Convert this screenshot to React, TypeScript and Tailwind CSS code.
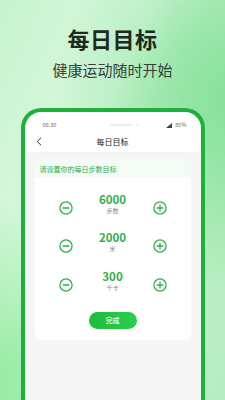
import React from "react";

const goals = [
  { value: "6000", unit: "步数" },
  { value: "2000", unit: "米" },
  { value: "300", unit: "千卡" },
];

function CircleIcon({ plus }: { plus?: boolean }) {
  return (
    <svg width="14" height="14" viewBox="0 0 14 14" className="shrink-0 mt-[8px]">
      <circle cx="7" cy="7" r="6.1" fill="none" stroke="#2fae4c" strokeWidth="1.3" />
      <line x1="4.1" y1="7" x2="9.9" y2="7" stroke="#2fae4c" strokeWidth="1.3" strokeLinecap="round" />
      {plus && (
        <line x1="7" y1="4.1" x2="7" y2="9.9" stroke="#2fae4c" strokeWidth="1.3" strokeLinecap="round" />
      )}
    </svg>
  );
}

export default function App() {
  return (
    <div className="relative w-[225px] h-[400px] overflow-hidden flex flex-col items-center font-['Noto_Sans_CJK_SC',sans-serif] bg-[#c3f1ca] bg-[radial-gradient(circle_at_110%_25%,#80df96_0%,rgba(128,223,150,0)_50%),radial-gradient(circle_at_-10%_95%,#92ea9f_0%,rgba(146,234,159,0)_40%),linear-gradient(115deg,#c8f3ce_0%,#d9f8dd_38%,#c2f1c9_50%,#b6eebf_100%)]">
      <h1 className="mt-[24px] text-[22px] leading-[28px] font-bold text-[#1d2a21] tracking-[0.5px]">
        每日目标
      </h1>
      <p className="mt-[8px] text-[15px] leading-[20px] text-[#34423a]">健康运动随时开始</p>

      <div className="mt-[28px] w-[184px] flex-1 rounded-t-[20px] border-4 border-b-0 border-[#1fb03c] bg-white flex flex-col overflow-hidden">
        {/* status bar */}
        <div className="h-[19px] pt-[7px] px-[14px] pl-[18px] flex items-center justify-between text-[5.5px] leading-[8px] text-[#666]">
          <span>06:30</span>
          <div className="flex items-center gap-[4px] ml-[26px]">
            <div className="w-[22px] h-[2px] rounded-full bg-[#ececec]" />
            <div className="w-[2px] h-[2px] rounded-full bg-[#ececec]" />
          </div>
          <div className="flex items-center gap-[3px]">
            <svg width="6" height="5" viewBox="0 0 6 5">
              <path d="M0 5 L6 0 L6 5 Z" fill="#444" />
            </svg>
            <span>80%</span>
          </div>
        </div>

        {/* nav bar */}
        <div className="relative h-[21px] flex items-center justify-center">
          <svg width="6" height="9" viewBox="0 0 6 9" className="absolute left-[11px] top-[6px]">
            <path d="M5 0.8 L1.2 4.5 L5 8.2" fill="none" stroke="#333" strokeWidth="1" />
          </svg>
          <span className="text-[8px] leading-[10px] text-[#222]">每日目标</span>
        </div>

        {/* content */}
        <div className="flex-1 bg-[#f5f5f5] px-[10px] pt-[6px]">
          <div className="bg-white rounded-[6px] overflow-hidden flex flex-col items-center pb-[11px]">
            <div className="w-full h-[20px] bg-[#f4fbf5] pl-[5px] flex items-center pt-[3px]">
              <span className="text-[7px] leading-[9px] text-[#2fa84a]">请设置你的每日步数目标</span>
            </div>
            <div className="flex flex-col gap-[16.5px] pt-[14.5px]">
              {goals.map((g) => (
                <div key={g.unit} className="flex items-center gap-[15px] h-[22px]">
                  <CircleIcon />
                  <div className="w-[50px] flex flex-col items-center">
                    <span className="text-[11.5px] leading-[13px] font-bold text-[#2fae4c]">{g.value}</span>
                    <span className="mt-[1px] text-[6px] leading-[8px] text-[#8a8a8a]">{g.unit}</span>
                  </div>
                  <CircleIcon plus />
                </div>
              ))}
            </div>
            <button className="mt-[20.5px] w-[48px] h-[17px] rounded-full bg-[linear-gradient(90deg,#1dbd3c,#2ccf4a)] text-white text-[7px] leading-[9px] font-medium">
              完成
            </button>
          </div>
        </div>
      </div>
    </div>
  );
}
